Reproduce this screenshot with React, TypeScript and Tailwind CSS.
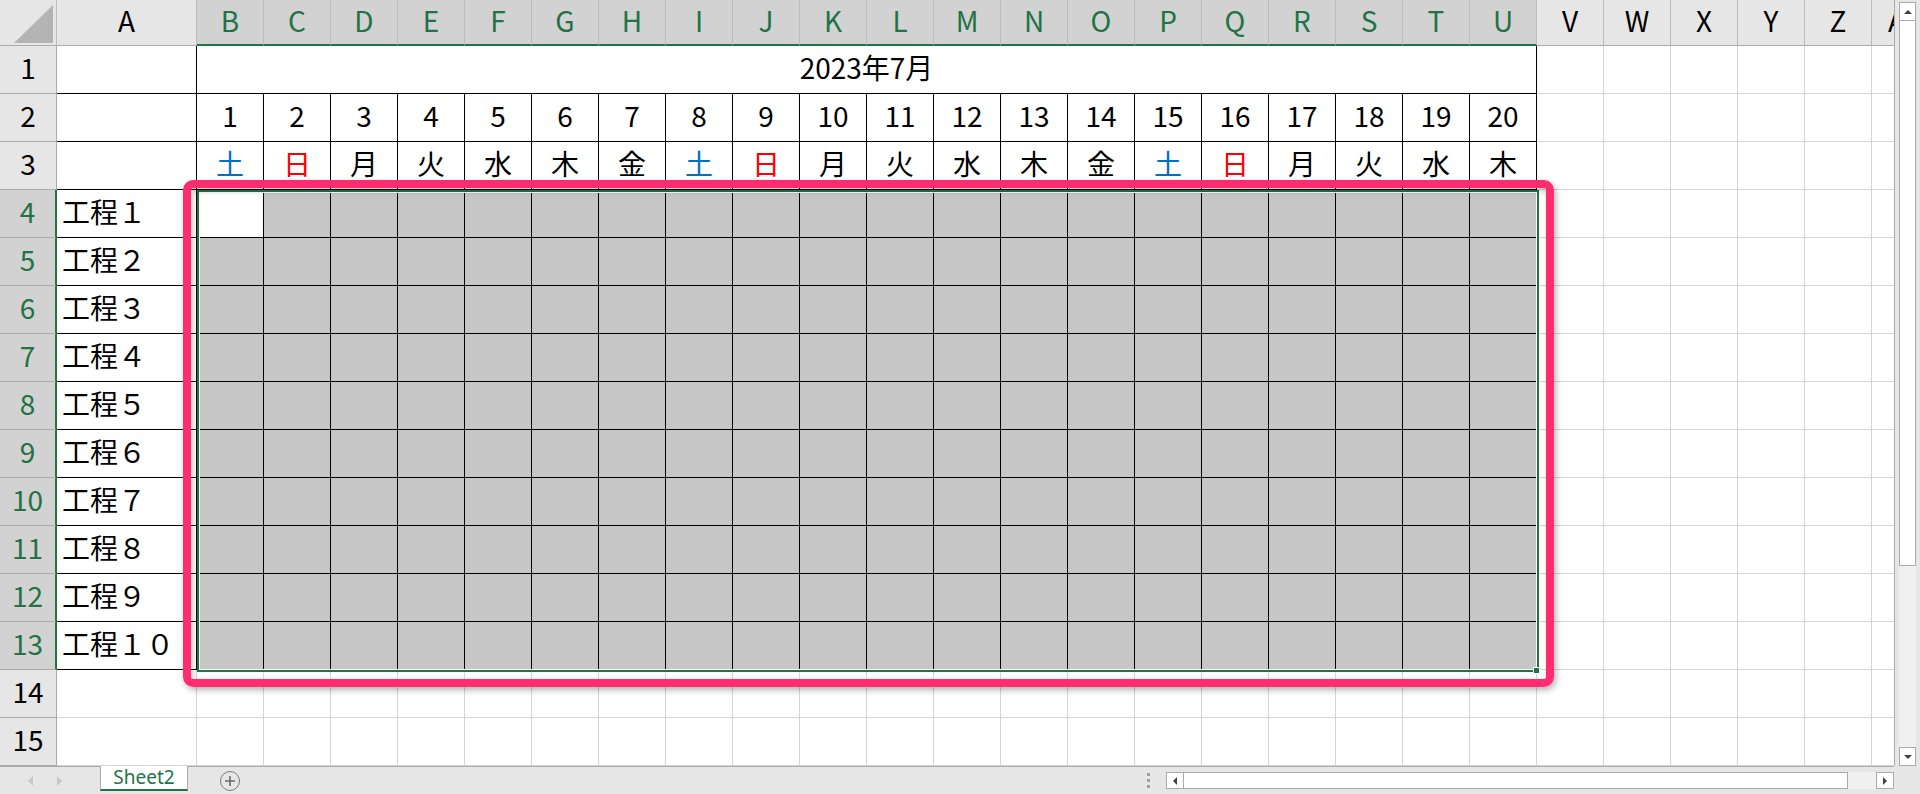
import React from 'react';

const COLS = ['A','B','C','D','E','F','G','H','I','J','K','L','M','N','O','P','Q','R','S','T','U','V','W','X','Y','Z','AA'];
const DAYS = ['土','日','月','火','水','木','金','土','日','月','火','水','木','金','土','日','月','火','水','木'];
const STEPS = ['１','２','３','４','５','６','７','８','９','１０'];

// r: sheet row (1..15), c: column index (1 = A ... 27 = AA)
function cellClass(r: number, c: number) {
  const inTable = r <= 13 && c <= 21;
  const shaded = r >= 4 && r <= 13 && c >= 2 && c <= 21 && !(r === 4 && c === 2);
  const border = inTable
    ? 'border-r border-b border-r-black border-b-black'
    : 'border-r border-b border-r-[#d4d4d4] border-b-[#d4d4d4]';
  return `${border} ${shaded ? 'bg-[#c6c6c6]' : 'bg-white'}`;
}

const dayColor = (d: string) =>
  d === '土' ? 'text-[#0070c0]' : d === '日' ? 'text-[#ff0000]' : 'text-black';

const Corner = () => (
  <div className="border-r border-b border-r-[#bcbcbc] border-b-[#ababab] bg-[#e6e6e6]">
    <svg width="56" height="45" viewBox="0 0 56 45">
      <polygon points="53,5 53,43 14,43" fill="#b4b4b4" />
    </svg>
  </div>
);

const ColHeader = ({ label, selected }: { label: string; selected: boolean }) => (
  <div
    className={`flex items-center justify-center whitespace-nowrap overflow-hidden pb-[5px] leading-[28px] border-r border-r-[#bcbcbc] ${
      selected
        ? 'bg-[#d2d2d2] text-[#217346] border-b-2 border-b-[#217346]'
        : 'bg-[#e6e6e6] text-black border-b border-b-[#ababab]'
    }`}
  >
    {label}
  </div>
);

const RowHeader = ({ n }: { n: number }) => {
  const selected = n >= 4 && n <= 13;
  return (
    <div
      className={`flex items-center justify-center pb-[5px] leading-[28px] border-b border-b-[#ababab] ${
        selected
          ? 'bg-[#d2d2d2] text-[#217346] border-r-2 border-r-[#217346]'
          : 'bg-[#e6e6e6] text-black border-r border-r-[#ababab]'
      }`}
    >
      {n}
    </div>
  );
};

function Sheet() {
  const cells: React.ReactNode[] = [];

  cells.push(<Corner key="corner" />);
  COLS.forEach((l, i) => cells.push(<ColHeader key={`h${l}`} label={l} selected={i >= 1 && i <= 20} />));

  for (let r = 1; r <= 15; r++) {
    cells.push(<RowHeader key={`r${r}`} n={r} />);
    for (let c = 1; c <= 27; c++) {
      if (r === 1 && c >= 3 && c <= 21) continue;
      const key = `${r}-${c}`;
      if (r === 1 && c === 2) {
        cells.push(
          <div
            key={key}
            className="col-span-20 flex items-center justify-center pb-[6px] leading-[28px] bg-white border-r border-b border-r-black border-b-black"
          >
            2023年7月
          </div>
        );
        continue;
      }
      let content: React.ReactNode = null;
      let align = 'justify-center';
      let color = 'text-black';
      if (c === 1 && r >= 4 && r <= 13) {
        content = `工程${STEPS[r - 4]}`;
        align = 'justify-start pl-[5px]';
      } else if (r === 2 && c >= 2 && c <= 21) {
        content = c - 1;
      } else if (r === 3 && c >= 2 && c <= 21) {
        content = DAYS[c - 2];
        color = dayColor(DAYS[c - 2]);
      }
      cells.push(
        <div
          key={key}
          className={`flex items-center whitespace-nowrap pb-[6px] leading-[28px] ${align} ${color} ${cellClass(r, c)}`}
        >
          {content}
        </div>
      );
    }
  }

  return (
    <div className="relative w-[1894px] h-[766px] overflow-hidden">
      <div className="grid grid-cols-[57px_140px_repeat(26,67px)] grid-rows-[46px_repeat(15,48px)] w-max">
        {cells}
      </div>
      {/* selection border */}
      <div className="absolute left-[197px] top-[190px] w-[1342px] h-[482px] border-2 border-[#217346]">
        <div className="w-full h-full border border-white" />
      </div>
      <div className="absolute left-[1533px] top-[667px] w-[7px] h-[7px] bg-[#217346] border border-white" />
      {/* annotation frame */}
      <div className="absolute left-[183px] top-[180px] w-[1371px] h-[507px] rounded-[10px] border-[8px] border-[#ff2d6f] shadow-[2px_3px_6px_rgba(0,0,0,0.3),inset_2px_3px_6px_rgba(0,0,0,0.22)]" />
    </div>
  );
}

const Tri = ({ dir, color, w, h }: { dir: 'up' | 'down' | 'left' | 'right'; color: string; w: number; h: number }) => {
  const pts =
    dir === 'up'
      ? `0,${h} ${w},${h} ${w / 2},0`
      : dir === 'down'
      ? `0,0 ${w},0 ${w / 2},${h}`
      : dir === 'left'
      ? `${w},0 ${w},${h} 0,${h / 2}`
      : `0,0 0,${h} ${w},${h / 2}`;
  return (
    <svg width={w} height={h} viewBox={`0 0 ${w} ${h}`}>
      <polygon points={pts} fill={color} />
    </svg>
  );
};

function VScroll() {
  return (
    <div className="w-[26px] h-[766px] bg-[#e6e6e6] border-l border-[#ababab] flex justify-center pt-[2px]">
      <div className="w-[17px] h-[764px] bg-[#f0f0f0] flex flex-col">
        <div className="h-[19px] bg-white border border-[#ababab] flex items-center justify-center">
          <Tri dir="up" color="#404040" w={8} h={4} />
        </div>
        <div className="h-[545px] bg-white border border-t-0 border-[#ababab]" />
        <div className="flex-1" />
        <div className="h-[19px] bg-white border border-[#ababab] flex items-center justify-center">
          <Tri dir="down" color="#404040" w={8} h={4} />
        </div>
      </div>
    </div>
  );
}

function BottomBar() {
  return (
    <div className="flex h-[28px] bg-[#e6e6e6]">
      <div className="w-[100px] border-t border-[#ababab] flex items-center pl-[28px] gap-[24px]">
        <Tri dir="left" color="#c8c8c8" w={5} h={10} />
        <Tri dir="right" color="#c8c8c8" w={5} h={10} />
      </div>
      <div className="w-[88px] h-[25px] bg-white border-x border-[#ababab] border-b-2 border-b-[#217346] flex items-center justify-center text-[19px] text-[#217346] font-['Noto_Sans',sans-serif]">
        Sheet2
      </div>
      <div className="w-[1706px] border-t border-[#ababab] flex items-center">
        <div className="ml-[32px] w-[20px] h-[20px] rounded-full border-[1.5px] border-[#7a7a7a] flex items-center justify-center">
          <svg width="12" height="12" viewBox="0 0 12 12">
            <path d="M6 1v10M1 6h10" stroke="#6a6a6a" strokeWidth="1.6" />
          </svg>
        </div>
        <div className="ml-[907px] flex flex-col gap-[3px]">
          <div className="w-[3px] h-[3px] bg-[#a0a0a0]" />
          <div className="w-[3px] h-[3px] bg-[#a0a0a0]" />
          <div className="w-[3px] h-[3px] bg-[#a0a0a0]" />
        </div>
        <div className="ml-[16px] w-[728px] h-[17px] flex bg-[#f0f0f0]">
          <div className="w-[18px] bg-white border border-[#ababab] flex items-center justify-center">
            <Tri dir="left" color="#404040" w={4} h={8} />
          </div>
          <div className="w-[664px] bg-white border-y border-r border-[#ababab]" />
          <div className="flex-1" />
          <div className="w-[18px] bg-white border border-[#ababab] flex items-center justify-center">
            <Tri dir="right" color="#404040" w={4} h={8} />
          </div>
        </div>
      </div>
      <div className="w-[26px]" />
    </div>
  );
}

export default function App() {
  return (
    <div className="w-[1920px] h-[794px] overflow-hidden bg-white text-[28px] text-black font-['Noto_Sans_CJK_JP','Noto_Sans',sans-serif]">
      <div className="flex h-[766px]">
        <Sheet />
        <VScroll />
      </div>
      <BottomBar />
    </div>
  );
}
